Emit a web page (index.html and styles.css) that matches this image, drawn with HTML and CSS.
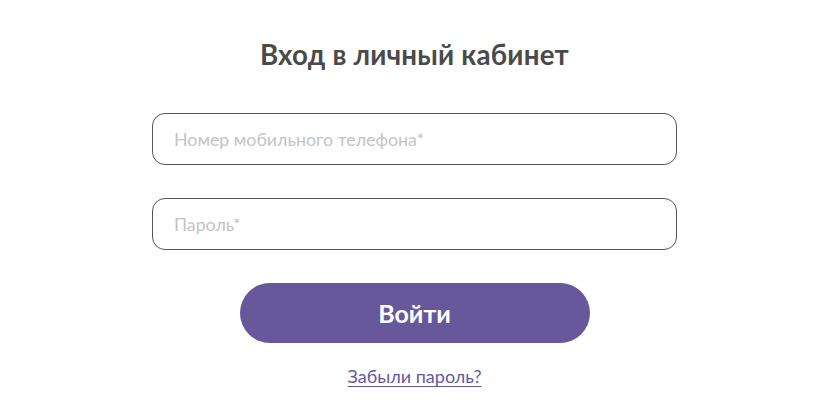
FILE: index.html
```html
<!DOCTYPE html>
<html lang="ru">
<head>
<meta charset="utf-8">
<title>Вход в личный кабинет</title>
<link rel="stylesheet" href="styles.css">
</head>
<body>
<main class="page">
  <form class="login">
    <h1 class="login__title">Вход в личный кабинет</h1>
    <input class="login__field" type="tel" placeholder="Номер мобильного телефона*">
    <input class="login__field" type="password" placeholder="Пароль*">
    <button class="login__submit" type="button">Войти</button>
    <a class="login__forgot" href="#">Забыли пароль?</a>
  </form>
</main>
</body>
</html>
```

FILE: styles.css
```css
html, body {
  margin: 0;
  padding: 0;
  background: #ffffff;
}

.page {
  padding-left: 12px;
  display: flex;
  justify-content: center;
  font-family: "Lato", "Noto Sans", sans-serif;
}

.login {
  width: 525px;
  display: flex;
  flex-direction: column;
  align-items: center;
  padding-top: 39px;
}

.login__title {
  margin: 0 0 42px;
  font-size: 27.7px;
  line-height: 32px;
  font-weight: 700;
  color: #4a4a4a;
  letter-spacing: 0.2px;
}

.login__field {
  box-sizing: border-box;
  width: 525px;
  height: 52px;
  margin: 0 0 33px;
  padding: 0 21px;
  border: 1px solid #555555;
  border-radius: 13px;
  font-family: inherit;
  font-size: 17.8px;
  color: #333333;
  outline: none;
  background: #ffffff;
}

.login__field::placeholder {
  color: #c4c4c4;
}

.login__submit {
  width: 350px;
  height: 60px;
  margin: 0 0 22px;
  border: 0;
  border-radius: 30px;
  background: #67589c;
  color: #ffffff;
  font-family: inherit;
  font-size: 25px;
  font-weight: 700;
  cursor: pointer;
}

.login__forgot {
  font-size: 18px;
  color: #67589c;
  text-decoration: underline;
  text-underline-offset: 3px;
}
```
